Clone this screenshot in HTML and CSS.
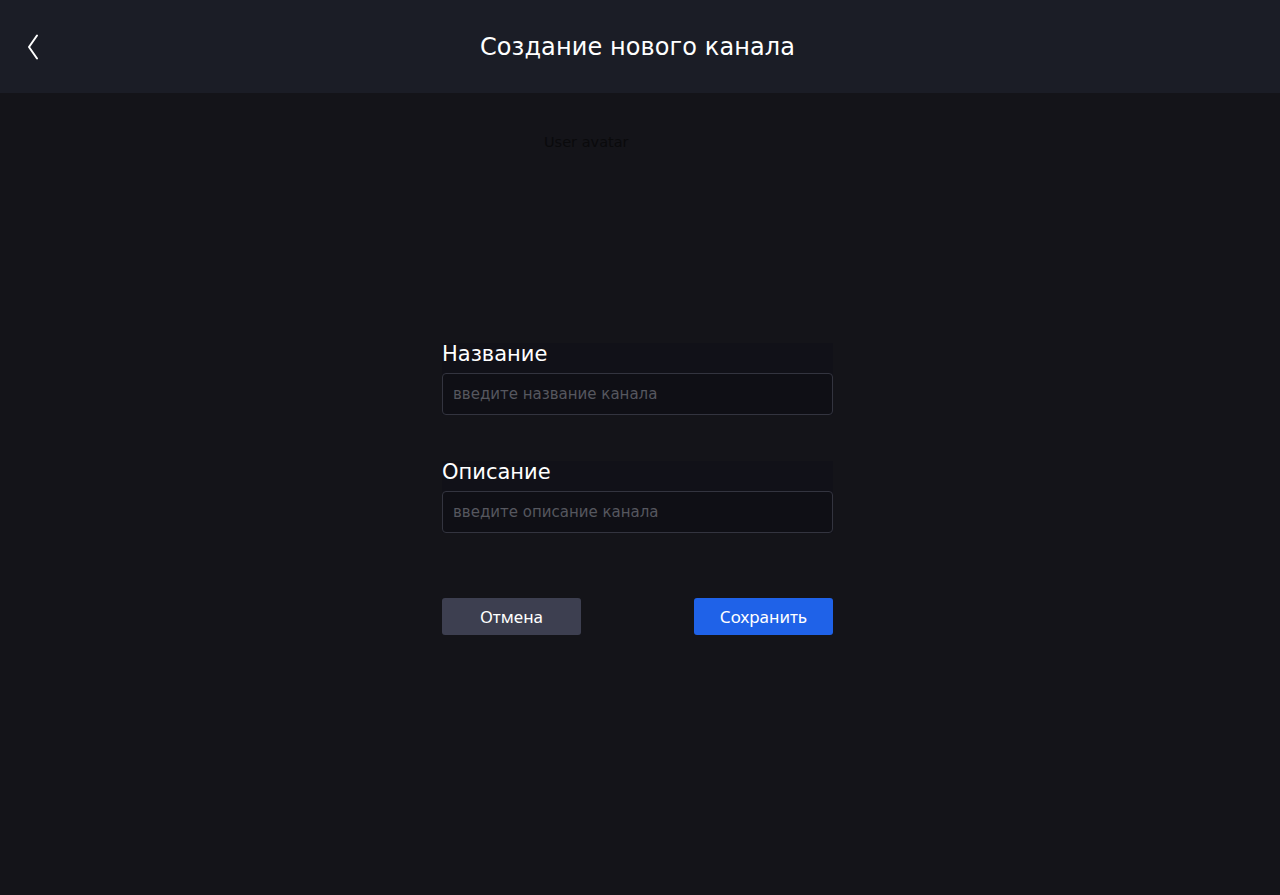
FILE: index.html
```html
<!DOCTYPE html>
<html lang="ru">
<head>
<meta charset="utf-8">
<title>Создание нового канала</title>
<link rel="stylesheet" href="styles.css">
</head>
<body>
<header class="topbar">
  <button class="back" aria-label="Назад">
    <svg width="14" height="26" viewBox="0 0 14 26"><path d="M11 1.5 L3 13 L11 24.5" fill="none" stroke="#ffffff" stroke-width="2" stroke-linecap="round" stroke-linejoin="round"/></svg>
  </button>
  <h1 class="title">Создание нового канала</h1>
</header>
<main class="content">
  <div class="avatar"><span class="alt">User avatar</span></div>
  <form class="form">
    <div class="field">
      <label class="label">Название</label>
      <input class="input" type="text" placeholder="введите название канала">
    </div>
    <div class="field">
      <label class="label">Описание</label>
      <input class="input" type="text" placeholder="введите описание канала">
    </div>
    <div class="actions">
      <button type="button" class="btn cancel">Отмена</button>
      <button type="button" class="btn save">Сохранить</button>
    </div>
  </form>
</main>
</body>
</html>
```
FILE: styles.css
```css
* { box-sizing: border-box; }
html, body { margin: 0; padding: 0; }
body {
  background: #141419;
  font-family: "DejaVu Sans", sans-serif;
  color: #ffffff;
  min-height: 895px;
}
.topbar {
  height: 93px;
  background: #1b1d26;
  display: flex;
  align-items: center;
  justify-content: center;
  position: relative;
  padding-right: 5px;
}
.back {
  position: absolute;
  left: 26px;
  top: 34px;
  background: none;
  border: 0;
  padding: 0;
  width: 14px;
  height: 26px;
  cursor: pointer;
}
.back svg { display: block; }
.title {
  margin: 0;
  font-size: 24px;
  font-weight: 400;
  letter-spacing: 0.1px;
  color: #ffffff;
}
.content {
  display: flex;
  flex-direction: column;
  align-items: center;
  padding-right: 5px;
}
.avatar {
  width: 391px;
  height: 250px;
  padding-top: 39px;
  padding-left: 102px;
}
.alt {
  font-size: 14.5px;
  color: #0a0a0c;
  font-weight: 500;
}
.form {
  width: 391px;
  display: flex;
  flex-direction: column;
}
.field {
  display: flex;
  flex-direction: column;
  gap: 8px;
  background: #111118;
  margin-bottom: 46px;
}
.label {
  font-size: 21px;
  line-height: 22px;
  color: #ffffff;
}
.input {
  height: 42px;
  width: 100%;
  background: #0f0f15;
  border: 1px solid #33343f;
  border-radius: 4px;
  padding: 0 10px;
  font-family: "DejaVu Sans", sans-serif;
  font-size: 15px;
  color: #ffffff;
  outline: none;
}
.input::placeholder { color: #56575f; }
.actions {
  display: flex;
  justify-content: space-between;
  margin-top: 19px;
}
.btn {
  width: 139px;
  height: 37px;
  border: 0;
  border-radius: 3px;
  font-family: "Noto Sans", sans-serif;
  font-size: 17px;
  color: #ffffff;
  cursor: pointer;
}
.cancel { background: #3d3f50; }
.save { background: #1f62e8; }
```
